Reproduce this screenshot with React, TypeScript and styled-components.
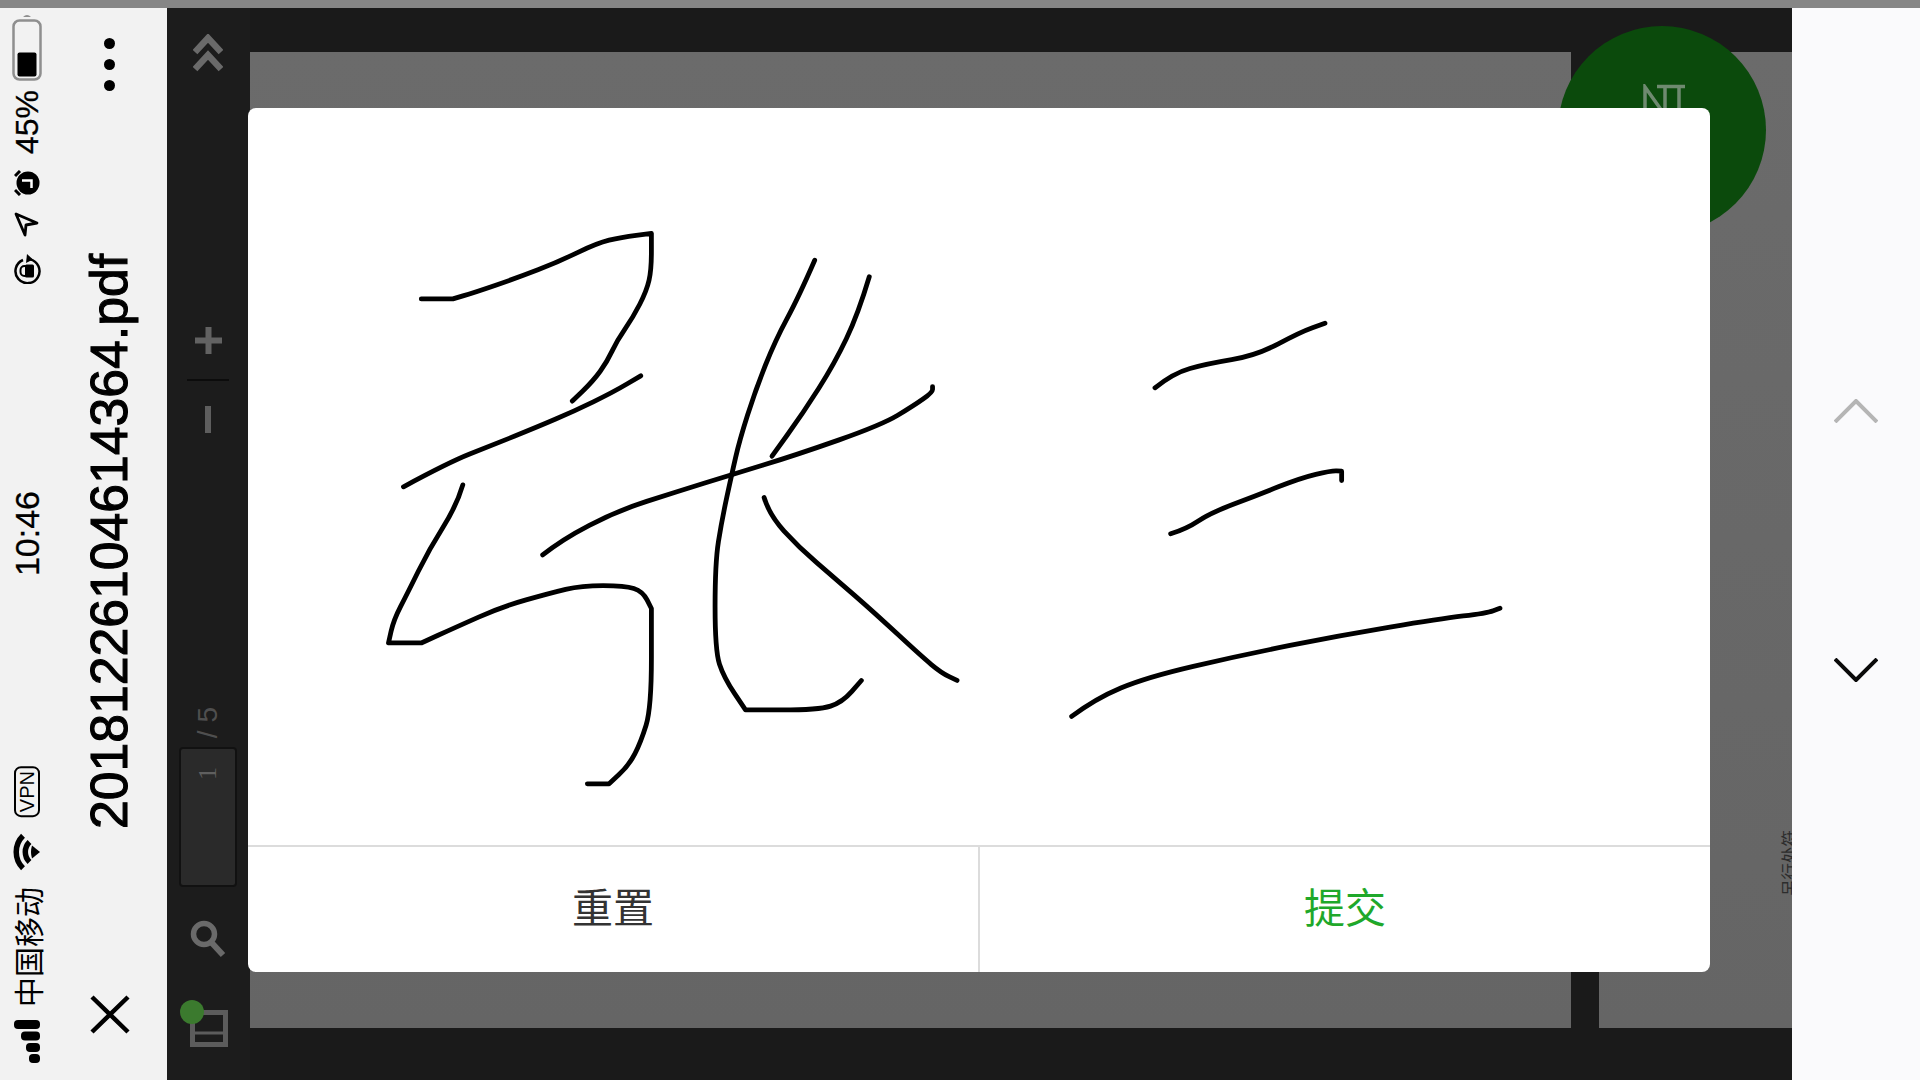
import styled, { createGlobalStyle } from "styled-components";

type Point = [number, number];

const UPPER_STROKES: Point[][] = [
  [[155, 231], [235, 231], [235, 231], [290, 214], [400, 175], [500, 135], [600, 85], [660, 70], [737, 60], [737, 60], [737, 155], [725, 210], [690, 280], [650, 340], [625, 395], [590, 445], [537, 498]],
  [[110, 722], [225, 658], [330, 615], [450, 565], [540, 525], [640, 475], [710, 432]],
  [[260, 717], [245, 770], [175, 885], [120, 1000], [85, 1070], [72, 1130], [72, 1130], [155, 1130], [155, 1130], [240, 1090], [360, 1035], [480, 1000], [560, 980], [670, 980], [715, 995], [737, 1040], [737, 1040], [737, 1300], [710, 1390], [680, 1450], [630, 1498], [630, 1498], [575, 1498]],
  [[1150, 130], [1110, 225], [1050, 340], [1000, 470], [960, 600], [940, 690], [915, 810], [898, 920], [898, 1150], [920, 1220], [975, 1305], [975, 1305], [1160, 1305], [1220, 1285], [1268, 1228]],
  [[1288, 173], [1260, 270], [1200, 400], [1120, 530], [1042, 642]],
  [[462, 900], [510, 860], [650, 785], [800, 735], [940, 690], [1100, 640], [1320, 560], [1400, 510], [1448, 475], [1448, 460]],
  [[1022, 750], [1035, 795], [1110, 880], [1200, 960], [1300, 1050], [1420, 1165], [1470, 1208], [1510, 1228]],
];

const LOWER_STROKES: Point[][] = [
  [[345, 292], [400, 248], [500, 220], [650, 195], [780, 125], [855, 98]],
  [[392, 730], [440, 715], [510, 668], [650, 615], [780, 563], [875, 540], [905, 542], [905, 542], [905, 570]],
  [[95, 1278], [165, 1225], [320, 1160], [600, 1095], [900, 1035], [1200, 985], [1340, 968], [1380, 953]],
];

// midpoint smoothing, a repeated point keeps a hard corner
const toPath = (points: Point[]) => {
  let d = `M${points[0][0]} ${points[0][1]}`;
  for (let i = 1; i < points.length - 1; i++) {
    const [x, y] = points[i];
    const [nx, ny] = points[i + 1];
    d += ` Q${x} ${y} ${(x + nx) / 2} ${(y + ny) / 2}`;
  }
  const last = points[points.length - 1];
  return `${d} L${last[0]} ${last[1]}`;
};

const App = () => {
  return (
    <Screen>
      <GlobalStyle />
      <TopStrip />
      <Body>
        <PhoneBar>
          <StatusColumn>
            <StatusGroup>
              <svg width="30" height="68" viewBox="0 0 30 68">
                <path d="M11 4 Q15 0 19 4 Z" fill="#8f8f8f" />
                <rect x="1.5" y="7.5" width="27" height="59" rx="6" fill="none" stroke="#8f8f8f" strokeWidth="2.5" />
                <rect x="5.5" y="39.5" width="19" height="24" rx="2" fill="#000" />
              </svg>
              <BatteryText>45%</BatteryText>
              <svg width="26" height="26" viewBox="0 0 26 26">
                <circle cx="14" cy="13" r="11.5" fill="#000" />
                <path d="M1 6 L6 1 M1 20 L6 25" stroke="#000" strokeWidth="3" />
                <path d="M8 10.5 H17.5 V18" fill="none" stroke="#fff" strokeWidth="2.5" />
              </svg>
              <svg width="25" height="25" viewBox="0 0 25 25">
                <path d="M2 2 L23 11 L12 13 L11 23 Z" fill="none" stroke="#000" strokeWidth="2.8" strokeLinejoin="round" />
              </svg>
              <svg width="28" height="31" viewBox="0 0 28 31">
                <path d="M10 7 A12 12 0 1 0 17 6.4" fill="none" stroke="#000" strokeWidth="2.5" />
                <path d="M14 1 L20 6.5 L13 10 Z" fill="#000" />
                <rect x="7.5" y="13" width="8" height="10" rx="4" fill="none" stroke="#000" strokeWidth="2" />
                <rect x="12" y="11.5" width="9" height="13" rx="1.5" fill="#000" />
              </svg>
            </StatusGroup>
            <Clock>10:46</Clock>
            <CarrierGroup>
              <VpnBadge>VPN</VpnBadge>
              <svg width="27" height="38" viewBox="0 0 27 38">
                <path d="M10 2.7 A23 23 0 0 0 10 35.3" fill="none" stroke="#000" strokeWidth="5.5" />
                <path d="M16.5 9 A14 14 0 0 0 16.5 29" fill="none" stroke="#000" strokeWidth="5.5" />
                <path d="M19 12.5 L27 19 L19 25.5 Q17 19 19 12.5 Z" fill="#000" />
              </svg>
              <Carrier>中国移动</Carrier>
              <svg width="27" height="43" viewBox="0 0 27 43">
                <rect x="1" y="0" width="26" height="9" rx="4" fill="#000" />
                <rect x="8" y="11.5" width="19" height="9" rx="4" fill="#000" />
                <rect x="13" y="23" width="14" height="9" rx="4" fill="#000" />
                <rect x="16" y="34" width="11" height="9" rx="4" fill="#000" />
              </svg>
            </CarrierGroup>
          </StatusColumn>
          <ActionColumn>
            <Dots>
              <Dot />
              <Dot />
              <Dot />
            </Dots>
            <FileName>20181226104614364.pdf</FileName>
            <CloseIcon width="40" height="39" viewBox="0 0 40 39">
              <path d="M2 2 L38 37 M38 2 L2 37" stroke="#000" strokeWidth="4.5" fill="none" />
            </CloseIcon>
          </ActionColumn>
        </PhoneBar>

        <Viewer>
          <ToolRail>
            <ChevronsIcon width="30" height="39" viewBox="0 0 30 39">
              <path d="M2 18 L15 4 L28 18 M2 35 L15 21 L28 35" fill="none" stroke="#6a6a6a" strokeWidth="6.5" />
            </ChevronsIcon>
            <PlusIcon width="27" height="27" viewBox="0 0 27 27">
              <path d="M0 13.5 H27 M13.5 0 V27" stroke="#626262" strokeWidth="6" />
            </PlusIcon>
            <RailDivider />
            <MinusBar />
            <PageCount>/ 5</PageCount>
            <PageInput>
              <PageNumber>1</PageNumber>
            </PageInput>
            <SearchIcon width="36" height="38" viewBox="0 0 36 38">
              <circle cx="14" cy="14" r="10.5" fill="none" stroke="#6a6a6a" strokeWidth="5.5" />
              <path d="M21 22 L33 35" stroke="#6a6a6a" strokeWidth="6" />
            </SearchIcon>
            <ThumbButton>
              <svg width="38" height="37" viewBox="0 0 38 37">
                <rect x="2.5" y="2.5" width="33" height="32" fill="none" stroke="#5c5c5c" strokeWidth="5" />
                <path d="M2 23 H36" stroke="#5c5c5c" strokeWidth="3" />
              </svg>
              <GreenDot />
            </ThumbButton>
          </ToolRail>
          <PageArea>
            <Page />
            <SidePage>
              <ClippedNote>另行处符</ClippedNote>
            </SidePage>
          </PageArea>
        </Viewer>

        <PagerBar>
          <svg width="44" height="24" viewBox="0 0 44 24">
            <path d="M1 23 L22 2 L43 23" fill="none" stroke="#b5b5b5" strokeWidth="4" />
          </svg>
          <svg width="44" height="24" viewBox="0 0 44 24">
            <path d="M1 1 L22 22 L43 1" fill="none" stroke="#0a0a0a" strokeWidth="4" />
          </svg>
        </PagerBar>
      </Body>

      <SignBadge>
        <svg width="48" height="32" viewBox="0 0 48 32">
          <path d="M1 30 L7 25 L7 3 L24 27 M19 2.5 H47 M27 3 V30 M41 3 V30" fill="none" stroke="#6f8a70" strokeWidth="3.5" />
        </svg>
      </SignBadge>

      <Modal>
        <SignArea>
          <SignatureSvg viewBox="0 0 1462 736">
            <g transform="translate(112 102) scale(0.3954 0.3827)">
              {UPPER_STROKES.map((points, i) => (
                <InkPath key={i} d={toPath(points)} />
              ))}
            </g>
            <g transform="translate(792 182) scale(0.3333)">
              {LOWER_STROKES.map((points, i) => (
                <InkPath key={i} d={toPath(points)} />
              ))}
            </g>
          </SignatureSvg>
        </SignArea>
        <ModalFooter>
          <FooterButton>重置</FooterButton>
          <FooterButton $primary>提交</FooterButton>
        </ModalFooter>
      </Modal>
    </Screen>
  );
};

const GlobalStyle = createGlobalStyle`
  html, body {
    margin: 0;
    padding: 0;
    overflow: hidden;
    background: #fff;
  }
  * {
    box-sizing: border-box;
  }
`;

const Screen = styled.div`
  position: relative;
  width: 1920px;
  height: 1080px;
  display: flex;
  flex-direction: column;
  overflow: hidden;
  font-family: "Liberation Sans", "Noto Sans CJK SC", sans-serif;
`;

const TopStrip = styled.div`
  height: 8px;
  flex: none;
  background: #868686;
`;

const Body = styled.div`
  flex: 1;
  display: flex;
  min-height: 0;
`;

const SideText = styled.span`
  writing-mode: vertical-rl;
  text-orientation: sideways;
  transform: rotate(180deg);
  line-height: 1;
  white-space: nowrap;
  color: #000;
`;

const PhoneBar = styled.div`
  width: 167px;
  flex: none;
  display: flex;
  background: #f2f2f2;
`;

const StatusColumn = styled.div`
  width: 53px;
  flex: none;
  display: flex;
  flex-direction: column;
  align-items: center;
  padding-top: 5px;
`;

const StatusGroup = styled.div`
  display: flex;
  flex-direction: column;
  align-items: center;
  gap: 16px;
`;

const BatteryText = styled(SideText)`
  font-size: 32px;
  -webkit-text-stroke: 0.3px #000;
  margin-top: -7px;
`;

const Clock = styled(SideText)`
  font-size: 34px;
  -webkit-text-stroke: 0.3px #000;
  margin-top: 207px;
`;

const CarrierGroup = styled.div`
  display: flex;
  flex-direction: column;
  align-items: center;
  gap: 16px;
  margin-top: 190px;
`;

const VpnBadge = styled(SideText)`
  font-size: 20px;
  padding: 3px 1px;
  border: 2.5px solid #000;
  border-radius: 7px;
`;

const Carrier = styled(SideText)`
  font-family: "Noto Sans CJK SC", sans-serif;
  font-size: 30px;
  margin-bottom: -3px;
`;

const ActionColumn = styled.div`
  flex: 1;
  display: flex;
  flex-direction: column;
  align-items: center;
  padding-top: 30px;
  padding-right: 1px;
`;

const Dots = styled.div`
  display: flex;
  flex-direction: column;
  gap: 10px;
`;

const Dot = styled.span`
  width: 11px;
  height: 11px;
  border-radius: 50%;
  background: #000;
`;

const FileName = styled(SideText)`
  font-size: 51.7px;
  -webkit-text-stroke: 1.1px #000;
  margin-top: 163px;
`;

const CloseIcon = styled.svg`
  margin-top: 166px;
`;

const Viewer = styled.div`
  flex: 1;
  display: flex;
  min-width: 0;
  background: #1a1a1a;
`;

const ToolRail = styled.div`
  width: 83px;
  flex: none;
  display: flex;
  flex-direction: column;
  align-items: center;
  background: #1c1c1c;
  padding-right: 1px;
`;

const ChevronsIcon = styled.svg`
  margin-top: 26px;
`;

const PlusIcon = styled.svg`
  margin-top: 254px;
`;

const RailDivider = styled.div`
  width: 42px;
  height: 2px;
  margin-top: 25px;
  background: #0c0c0c;
`;

const MinusBar = styled.div`
  width: 6px;
  height: 27px;
  margin-top: 25px;
  background: #5e5e5e;
`;

const PageCount = styled(SideText)`
  margin-top: 274px;
  font-size: 28px;
  font-weight: 300;
  color: #4f4f4f;
`;

const PageInput = styled.div`
  width: 58px;
  height: 140px;
  margin-top: 9px;
  padding-top: 18px;
  display: flex;
  flex-direction: column;
  align-items: center;
  background: #2a2a2a;
  border: 2px solid #111;
  border-radius: 4px;
`;

const PageNumber = styled(SideText)`
  font-family: "Liberation Serif", serif;
  font-size: 26px;
  color: #5f5f5f;
`;

const SearchIcon = styled.svg`
  margin-top: 33px;
`;

const ThumbButton = styled.div`
  position: relative;
  display: flex;
  margin-top: 52px;
  margin-left: 1px;
`;

const GreenDot = styled.span`
  position: absolute;
  left: -10px;
  top: -10px;
  width: 24px;
  height: 24px;
  border-radius: 50%;
  background: #3b7a2e;
`;

const PageArea = styled.div`
  flex: 1;
  display: flex;
  gap: 28px;
  padding: 44px 0 52px;
  min-width: 0;
`;

const Page = styled.div`
  width: 1321px;
  flex: none;
  background: linear-gradient(#6b6b6b, #656565);
`;

const SidePage = styled(Page)`
  width: auto;
  flex: 1;
  display: flex;
  flex-direction: column;
  align-items: flex-end;
  overflow: hidden;
`;

const ClippedNote = styled(SideText)`
  font-family: "Noto Sans CJK SC", sans-serif;
  font-size: 16.5px;
  color: #2c2c2c;
  margin-top: 778px;
  margin-right: -5px;
`;

const PagerBar = styled.div`
  width: 128px;
  flex: none;
  display: flex;
  flex-direction: column;
  align-items: center;
  gap: 235px;
  padding-top: 391px;
  background: #fafafc;
`;

const SignBadge = styled.div`
  position: absolute;
  left: 1558px;
  top: 26px;
  width: 208px;
  height: 208px;
  padding-top: 58px;
  display: flex;
  justify-content: center;
  align-items: flex-start;
  border-radius: 50%;
  background: #0b4a0c;
`;

const Modal = styled.div`
  position: absolute;
  left: 248px;
  top: 108px;
  width: 1462px;
  height: 864px;
  display: flex;
  flex-direction: column;
  background: #fff;
  border-radius: 8px;
  overflow: hidden;
`;

const SignArea = styled.div`
  flex: 1;
  min-height: 0;
`;

const SignatureSvg = styled.svg`
  display: block;
  width: 100%;
  height: 100%;
`;

const InkPath = styled.path.attrs({ vectorEffect: "non-scaling-stroke" })`
  fill: none;
  stroke: #000;
  stroke-width: 4.8px;
  stroke-linecap: round;
  stroke-linejoin: round;
`;

const ModalFooter = styled.div`
  height: 127px;
  flex: none;
  display: flex;
  border-top: 2px solid #dcdcdc;
`;

const FooterButton = styled.div<{ $primary?: boolean }>`
  flex: 1;
  display: flex;
  align-items: center;
  justify-content: center;
  padding-bottom: 9px;
  font-family: "Noto Sans CJK SC", sans-serif;
  font-size: 41px;
  font-weight: 400;
  color: ${(props) => (props.$primary ? "#1fa82a" : "#333")};
  & + & {
    border-left: 2px solid #dcdcdc;
  }
`;

export default App;
